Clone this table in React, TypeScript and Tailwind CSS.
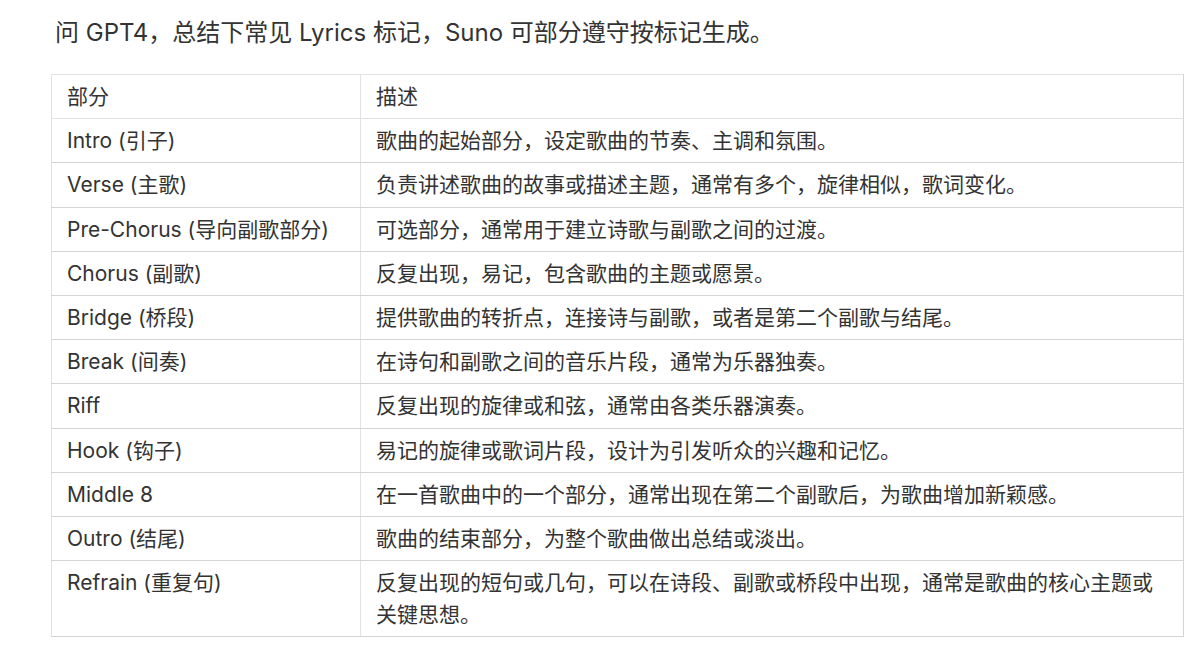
const rows: [string, string][] = [
  ['Intro (引子)', '歌曲的起始部分，设定歌曲的节奏、主调和氛围。'],
  ['Verse (主歌)', '负责讲述歌曲的故事或描述主题，通常有多个，旋律相似，歌词变化。'],
  ['Pre-Chorus (导向副歌部分)', '可选部分，通常用于建立诗歌与副歌之间的过渡。'],
  ['Chorus (副歌)', '反复出现，易记，包含歌曲的主题或愿景。'],
  ['Bridge (桥段)', '提供歌曲的转折点，连接诗与副歌，或者是第二个副歌与结尾。'],
  ['Break (间奏)', '在诗句和副歌之间的音乐片段，通常为乐器独奏。'],
  ['Riff', '反复出现的旋律或和弦，通常由各类乐器演奏。'],
  ['Hook (钩子)', '易记的旋律或歌词片段，设计为引发听众的兴趣和记忆。'],
  ['Middle 8', '在一首歌曲中的一个部分，通常出现在第二个副歌后，为歌曲增加新颖感。'],
  ['Outro (结尾)', '歌曲的结束部分，为整个歌曲做出总结或淡出。'],
  ['Refrain (重复句)', '反复出现的短句或几句，可以在诗段、副歌或桥段中出现，通常是歌曲的核心主题或关键思想。'],
];

export default function App() {
  return (
    <div
      className="min-h-screen bg-white text-[#333] pl-[51px] pr-[16px]"
      style={{ fontFamily: 'Inter, "Noto Sans CJK SC", sans-serif' }}
    >
      <p className="pt-[17px] pl-[4px] text-[24px] leading-[32px]">
        问 GPT4，总结下常见 Lyrics 标记，Suno 可部分遵守按标记生成。
      </p>

      <table className="mt-[25px] w-[1133px] border-collapse text-[21px] leading-[32px]">
        <thead>
          <tr>
            <th className="w-[309px] border border-[#e2e2e2] px-[15px] pt-[6px] pb-[5.2px] text-left font-normal">部分</th>
            <th className="border border-[#e2e2e2] border-r-[#d4d4d4] px-[15px] pt-[6px] pb-[5.2px] text-left font-normal">描述</th>
          </tr>
        </thead>
        <tbody>
          {rows.map(([part, desc]) => (
            <tr key={part}>
              <td className="border border-[#e2e2e2] border-b-[#d4d4d4] px-[15px] pt-[6px] pb-[5.2px] align-top">{part}</td>
              <td className="border border-[#e2e2e2] border-r-[#d4d4d4] border-b-[#d4d4d4] px-[15px] pt-[6px] pb-[5.2px] align-top">
                {desc}
              </td>
            </tr>
          ))}
        </tbody>
      </table>
    </div>
  );
}
